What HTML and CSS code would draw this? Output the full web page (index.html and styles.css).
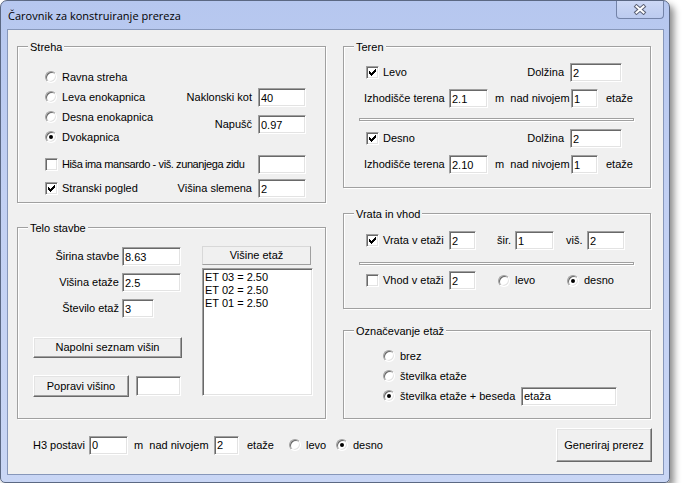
FILE: index.html
```html
<!DOCTYPE html>
<html>
<head>
<meta charset="utf-8">
<link rel="stylesheet" href="styles.css">
</head>
<body>
<div class="window">
  <div class="titlebar">
    <span class="title">Čarovnik za konstruiranje prereza</span>
    <div class="close">
      <svg width="14" height="11" viewBox="0 0 14 11"><path d="M3.5 2.5 L10.5 8.5 M10.5 2.5 L3.5 8.5" stroke="#5a6074" stroke-width="4" stroke-linecap="square" fill="none"/><path d="M3.5 2.5 L10.5 8.5 M10.5 2.5 L3.5 8.5" stroke="#fff" stroke-width="2" stroke-linecap="square" fill="none"/></svg>
    </div>
  </div>
  <div class="client">
    <div class="columns">
      <div class="col col-left">
        <div class="group g-streha">
          <span class="gtitle">Streha</span>
          <div class="streha-top">
            <div class="radio-list">
              <div class="opt"><span class="rb"></span>Ravna streha</div>
              <div class="opt"><span class="rb"></span>Leva enokapnica</div>
              <div class="opt"><span class="rb"></span>Desna enokapnica</div>
              <div class="opt"><span class="rb on"></span>Dvokapnica</div>
            </div>
            <div class="kv-list">
              <div class="kv"><span>Naklonski kot</span><input class="edit w48" type="text" value="40"></div>
              <div class="kv"><span>Napušč</span><input class="edit w48" type="text" value="0.97"></div>
            </div>
          </div>
          <div class="crow c-first">
            <div class="opt"><span class="cb"></span><span class="tight">Hiša ima mansardo - viš. zunanjega zidu</span></div>
            <input class="edit w48 push" type="text" value="">
          </div>
          <div class="crow c-second">
            <div class="opt"><span class="cb"><svg width="11" height="11" viewBox="0 0 11 11"><path d="M2 4H3V5H4V6H5V5H6V4H7V3H8V2H9V5H8V6H7V7H6V8H5V9H4V8H3V7H2Z" fill="#000"/></svg></span>Stranski pogled</div>
            <span class="push lbl-gap">Višina slemena</span>
            <input class="edit w48" type="text" value="2">
          </div>
        </div>

        <div class="group g-telo">
          <span class="gtitle">Telo stavbe</span>
          <div class="telo">
            <div class="telo-left">
              <div class="trow"><span class="tlabel">Širina stavbe</span><input class="edit w59" type="text" value="8.63"></div>
              <div class="trow"><span class="tlabel">Višina etaže</span><input class="edit w59" type="text" value="2.5"></div>
              <div class="trow"><span class="tlabel">Število etaž</span><input class="edit w32" type="text" value="3"></div>
              <button class="btn btn-fill">Napolni seznam višin</button>
              <div class="prow">
                <button class="btn btn-pop">Popravi višino</button>
                <input class="edit w45" type="text" value="">
              </div>
            </div>
            <div class="telo-right">
              <div class="lhead">Višine etaž</div>
              <div class="list">
                <div>ET 03 = 2.50</div>
                <div>ET 02 = 2.50</div>
                <div>ET 01 = 2.50</div>
              </div>
            </div>
          </div>
        </div>
      </div>

      <div class="col col-right">
        <div class="group g-teren">
          <span class="gtitle">Teren</span>
          <div class="row t-r1">
            <div class="opt"><span class="cb"><svg width="11" height="11" viewBox="0 0 11 11"><path d="M2 4H3V5H4V6H5V5H6V4H7V3H8V2H9V5H8V6H7V7H6V8H5V9H4V8H3V7H2Z" fill="#000"/></svg></span>Levo</div>
            <span class="push lbl-gap">Dolžina</span>
            <input class="edit w52" type="text" value="2">
          </div>
          <div class="row t-r2">
            <span class="w85">Izhodišče terena</span>
            <input class="edit w39" type="text" value="2.1">
            <span class="w83 pl7">m&nbsp; nad nivojem</span>
            <input class="edit w27" type="text" value="1">
            <span class="pl8">etaže</span>
          </div>
          <div class="sep t-sep"></div>
          <div class="row t-r3">
            <div class="opt"><span class="cb"><svg width="11" height="11" viewBox="0 0 11 11"><path d="M2 4H3V5H4V6H5V5H6V4H7V3H8V2H9V5H8V6H7V7H6V8H5V9H4V8H3V7H2Z" fill="#000"/></svg></span>Desno</div>
            <span class="push lbl-gap">Dolžina</span>
            <input class="edit w52" type="text" value="2">
          </div>
          <div class="row t-r4">
            <span class="w85">Izhodišče terena</span>
            <input class="edit w39" type="text" value="2.10">
            <span class="w83 pl7">m&nbsp; nad nivojem</span>
            <input class="edit w27" type="text" value="1">
            <span class="pl8">etaže</span>
          </div>
        </div>

        <div class="group g-vrata">
          <span class="gtitle">Vrata in vhod</span>
          <div class="row v-r1">
            <div class="opt w83"><span class="cb"><svg width="11" height="11" viewBox="0 0 11 11"><path d="M2 4H3V5H4V6H5V5H6V4H7V3H8V2H9V5H8V6H7V7H6V8H5V9H4V8H3V7H2Z" fill="#000"/></svg></span>Vrata v etaži</div>
            <input class="edit w27" type="text" value="2">
            <span class="w39 pl21">šir.</span>
            <input class="edit w39" type="text" value="1">
            <span class="w33 pl12">viš.</span>
            <input class="edit w38" type="text" value="2">
          </div>
          <div class="sep v-sep"></div>
          <div class="row v-r2">
            <div class="opt w83"><span class="cb"></span>Vhod v etaži</div>
            <input class="edit w27" type="text" value="2">
            <div class="opt w91 pl22"><span class="rb"></span>levo</div>
            <div class="opt"><span class="rb on"></span>desno</div>
          </div>
        </div>

        <div class="group g-ozn">
          <span class="gtitle">Označevanje etaž</span>
          <div class="oz-list">
            <div class="opt"><span class="rb"></span>brez</div>
            <div class="opt"><span class="rb"></span>številka etaže</div>
            <div class="opt"><div class="opt w126"><span class="rb on"></span>številka etaže + beseda</div><input class="edit w96" type="text" value="etaža"></div>
          </div>
        </div>
      </div>
    </div>

    <div class="bottom">
      <span class="w56">H3 postavi</span>
      <input class="edit w39" type="text" value="0">
      <span class="w86 pl6">m&nbsp; nad nivojem</span>
      <input class="edit w25" type="text" value="2">
      <span class="w50 pl8">etaže</span>
      <div class="opt w47"><span class="rb"></span>levo</div>
      <div class="opt"><span class="rb on"></span>desno</div>
      <button class="btn btn-gen">Generiraj prerez</button>
    </div>
  </div>
</div>
</body>
</html>
```

FILE: styles.css
```css
* { box-sizing: border-box; }
html, body { margin: 0; padding: 0; background: #fff; }
body {
  font-family: "Liberation Sans", Arial, sans-serif;
  font-size: 11px;
  line-height: 13px;
  color: #000;
}

.window {
  width: 670px;
  height: 483px;
  border: 1px solid #5b6883;
  border-radius: 7px 7px 5px 5px;
  background: linear-gradient(#b6c7ef, #c2d0f3 40%, #c9d6f5);
  box-shadow: 4px 5px 7px rgba(0, 0, 0, 0.45);
  padding: 0 5px 0 6px;
  display: flex;
  flex-direction: column;
}

.titlebar {
  height: 28px;
  flex: none;
  display: flex;
  align-items: flex-start;
}
.title {
  font-family: "Open Sans", "Noto Sans", sans-serif;
  font-size: 11px;
  line-height: 15px;
  margin: 7px 0 0 1px;
  white-space: nowrap;
}
.close {
  margin-left: auto;
  width: 48px;
  height: 18px;
  border: 1px solid #7383a8;
  border-top: none;
  border-radius: 0 0 4px 4px;
  background: linear-gradient(#ccd8f5, #bccbef);
  display: flex;
  align-items: center;
  justify-content: center;
}
.close svg { display: block; }

.client {
  flex: none;
  width: 657px;
  height: 446px;
  border: 1px solid #8797ba;
  background: #f0f0f0;
  display: flex;
  flex-direction: column;
}

.columns {
  display: flex;
  gap: 17px;
  padding: 16px 0 0 9px;
}
.col { display: flex; flex-direction: column; }
.col-left { width: 309px; }
.col-right { width: 308px; }

.group {
  position: relative;
  flex: none;
  border: 1px solid #a0a0a0;
  box-shadow: inset 1px 1px #fff, 1px 1px #fff;
}
.gtitle {
  position: absolute;
  top: -6px;
  left: 10px;
  padding: 0 2px;
  background: #f0f0f0;
  white-space: nowrap;
}
.g-streha { height: 157px; }
.g-telo { height: 192px; margin-top: 24px; }
.g-teren { height: 142px; }
.g-vrata { height: 96px; margin-top: 25px; }
.g-ozn { height: 89px; margin-top: 21px; }

/* controls */
.opt {
  display: flex;
  align-items: center;
  white-space: nowrap;
  flex: none;
}
.rb {
  position: relative;
  flex: none;
  width: 12px;
  height: 12px;
  margin-right: 5px;
  border-radius: 50%;
  border: 1px solid;
  border-color: #a0a0a0 #fff #fff #a0a0a0;
  background: #fff;
  box-shadow: inset 1px 1px #696969, inset -1px -1px #e3e3e3;
}
.rb.on::after {
  content: "";
  position: absolute;
  left: 3px;
  top: 3px;
  width: 4px;
  height: 4px;
  border-radius: 50%;
  background: #000;
}
.cb {
  flex: none;
  width: 13px;
  height: 13px;
  margin-right: 4px;
  border: 1px solid;
  border-color: #a0a0a0 #fff #fff #a0a0a0;
  background: #fff;
  box-shadow: inset 1px 1px #696969, inset -1px -1px #e3e3e3;
}
.cb svg { display: block; shape-rendering: crispEdges; }

.edit {
  flex: none;
  height: 19px;
  margin: 0;
  padding: 0 0 0 2px;
  border: 1px solid;
  border-color: #a0a0a0 #fff #fff #a0a0a0;
  box-shadow: inset 1px 1px #696969, inset -1px -1px #e3e3e3;
  background: #fff;
  font: inherit;
  color: #000;
  outline: none;
}
.btn {
  flex: none;
  margin: 0;
  padding: 0;
  font: inherit;
  color: #000;
  background: #f0f0f0;
  border: 1px solid;
  border-color: #fff #696969 #696969 #fff;
  box-shadow: inset -1px -1px #a0a0a0, inset 1px 1px #e3e3e3;
}
.sep {
  height: 3px;
  width: 275px;
  margin-left: 15px;
  border: 1px solid #a0a0a0;
  box-shadow: inset 1px 1px #fff, 1px 1px #fff;
}

.push { margin-left: auto; }
.lbl-gap { margin-right: 6px; }
.tight { letter-spacing: -0.4px; }

/* widths */
.w25 { width: 25px; }
.w27 { width: 27px; }
.w32 { width: 32px; }
.w33 { width: 33px; }
.w38 { width: 38px; }
.w39 { width: 39px; }
.w45 { width: 45px; }
.w47 { width: 47px; }
.w48 { width: 48px; }
.w50 { width: 50px; }
.w52 { width: 52px; }
.w56 { width: 56px; }
.w59 { width: 59px; }
.w83 { width: 83px; }
.w85 { width: 85px; }
.w86 { width: 86px; }
.w91 { width: 91px; }
.w96 { width: 96px; }
.w126 { width: 138px; }
.pl6 { padding-left: 6px; }
.pl7 { padding-left: 7px; }
.pl8 { padding-left: 8px; }
.pl12 { padding-left: 12px; }
.pl21 { padding-left: 21px; }
.pl22 { padding-left: 22px; }
span.w33, span.w39, span.w50, span.w56, span.w83, span.w85, span.w86 { flex: none; white-space: nowrap; }

/* Streha */
.streha-top {
  display: flex;
  margin-top: 20px;
  padding: 0 19px 0 27px;
}
.radio-list { display: flex; flex-direction: column; }
.radio-list .opt { height: 20px; }
.kv-list {
  margin-left: auto;
  padding-top: 21px;
  display: flex;
  flex-direction: column;
  gap: 8px;
}
.kv {
  display: flex;
  align-items: center;
  justify-content: flex-end;
  gap: 6px;
  height: 19px;
}
.crow {
  display: flex;
  align-items: center;
  height: 19px;
  padding: 0 19px 0 27px;
}
.c-first { margin-top: 8px; }
.c-second { margin-top: 5px; }

/* Telo stavbe */
.telo {
  display: flex;
  margin-top: 18px;
  padding-left: 15px;
}
.telo-left {
  width: 149px;
  margin-top: 1px;
  display: flex;
  flex-direction: column;
}
.trow {
  display: flex;
  align-items: center;
  height: 19px;
}
.trow + .trow { margin-top: 7px; }
.tlabel {
  width: 89px;
  padding-right: 3px;
  text-align: right;
  white-space: nowrap;
}
.btn-fill { width: 149px; height: 21px; margin-top: 19px; }
.prow {
  display: flex;
  align-items: center;
  height: 22px;
  margin-top: 17px;
}
.btn-pop { width: 96px; height: 22px; }
.prow .edit { margin-left: 7px; height: 20px; }
.telo-right {
  margin-left: 20px;
  display: flex;
  flex-direction: column;
}
.lhead {
  width: 109px;
  height: 19px;
  line-height: 17px;
  text-align: center;
  border: 1px solid;
  border-color: #d8d8d8 #a0a0a0 #a0a0a0 #d8d8d8;
  background: #f0f0f0;
}
.list {
  width: 111px;
  height: 128px;
  margin-top: 3px;
  padding: 2px 0 0 2px;
  border: 1px solid;
  border-color: #a0a0a0 #fff #fff #a0a0a0;
  box-shadow: inset 1px 1px #696969, inset -1px -1px #e3e3e3;
  background: #fff;
  white-space: nowrap;
}

/* rows in right column */
.row {
  display: flex;
  align-items: center;
  height: 19px;
}
.t-r1 { margin-top: 16px; padding: 0 28px 0 22px; }
.t-r2 { margin-top: 7px; padding-left: 20px; }
.t-sep { margin-top: 10px; }
.t-r3 { margin-top: 8px; padding: 0 28px 0 22px; }
.t-r4 { margin-top: 7px; padding-left: 20px; }

.v-r1 { margin-top: 17px; padding-left: 22px; }
.v-sep { margin-top: 12px; }
.v-r2 { margin-top: 6px; padding-left: 22px; }

.oz-list {
  margin-top: 15px;
  padding-left: 39px;
  display: flex;
  flex-direction: column;
}
.oz-list > .opt { height: 20px; }

/* bottom row */
.bottom {
  display: flex;
  align-items: center;
  height: 34px;
  margin-top: 9px;
  padding-left: 25px;
  white-space: nowrap;
}
.btn-gen {
  margin-left: auto;
  margin-right: 11px;
  width: 96px;
  height: 34px;
}
```
